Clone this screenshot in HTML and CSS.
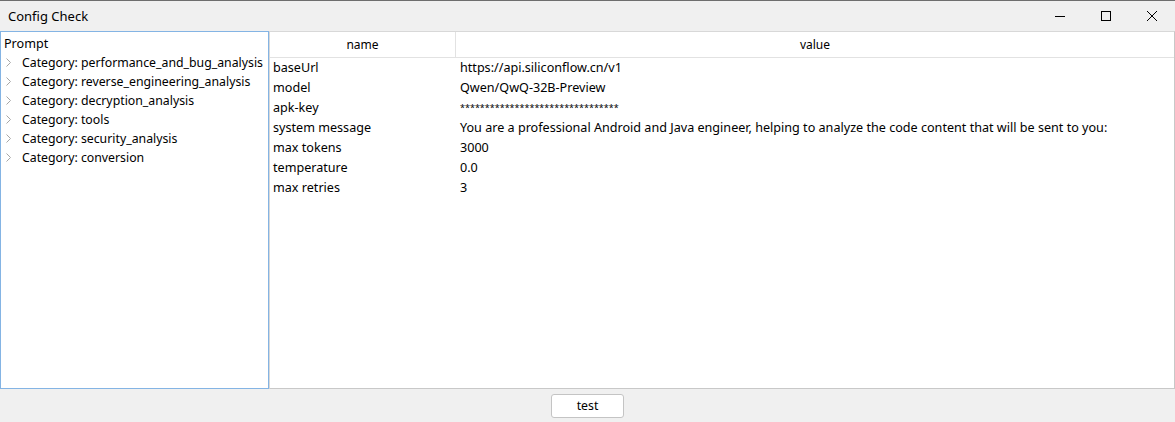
FILE: index.html
```html
<!DOCTYPE html>
<html>
<head>
<meta charset="utf-8">
<link rel="stylesheet" href="styles.css">
</head>
<body>
<div class="window">
  <div class="titlebar">
    <span class="title">Config Check</span>
    <div class="controls">
      <div class="ctl"><svg width="12" height="12" viewBox="0 0 12 12"><path d="M1 6.5H11" stroke="#000" stroke-width="1"/></svg></div>
      <div class="ctl"><svg width="12" height="12" viewBox="0 0 12 12"><rect x="1.5" y="1.5" width="9" height="9" fill="none" stroke="#000" stroke-width="1"/></svg></div>
      <div class="ctl"><svg width="12" height="12" viewBox="0 0 12 12"><path d="M1 1L11 11M11 1L1 11" stroke="#000" stroke-width="1"/></svg></div>
    </div>
  </div>
  <div class="main">
    <div class="tree">
      <div class="tree-head">Prompt</div>
      <div class="tree-row"><svg class="chev" width="5" height="9" viewBox="0 0 5 9"><path d="M0.5 0.5L4.5 4.5L0.5 8.5" fill="none" stroke="#a6a6a6" stroke-width="1"/></svg>Category: performance_and_bug_analysis</div>
      <div class="tree-row"><svg class="chev" width="5" height="9" viewBox="0 0 5 9"><path d="M0.5 0.5L4.5 4.5L0.5 8.5" fill="none" stroke="#a6a6a6" stroke-width="1"/></svg>Category: reverse_engineering_analysis</div>
      <div class="tree-row"><svg class="chev" width="5" height="9" viewBox="0 0 5 9"><path d="M0.5 0.5L4.5 4.5L0.5 8.5" fill="none" stroke="#a6a6a6" stroke-width="1"/></svg>Category: decryption_analysis</div>
      <div class="tree-row"><svg class="chev" width="5" height="9" viewBox="0 0 5 9"><path d="M0.5 0.5L4.5 4.5L0.5 8.5" fill="none" stroke="#a6a6a6" stroke-width="1"/></svg>Category: tools</div>
      <div class="tree-row"><svg class="chev" width="5" height="9" viewBox="0 0 5 9"><path d="M0.5 0.5L4.5 4.5L0.5 8.5" fill="none" stroke="#a6a6a6" stroke-width="1"/></svg>Category: security_analysis</div>
      <div class="tree-row"><svg class="chev" width="5" height="9" viewBox="0 0 5 9"><path d="M0.5 0.5L4.5 4.5L0.5 8.5" fill="none" stroke="#a6a6a6" stroke-width="1"/></svg>Category: conversion</div>
    </div>
    <div class="table">
      <div class="thead">
        <div class="th c-name">name</div>
        <div class="th c-value">value</div>
      </div>
      <div class="tbody">
        <div class="tr"><div class="td c-name">baseUrl</div><div class="td c-value">https://api.siliconflow.cn/v1</div></div>
        <div class="tr"><div class="td c-name">model</div><div class="td c-value">Qwen/QwQ-32B-Preview</div></div>
        <div class="tr"><div class="td c-name">apk-key</div><div class="td c-value"><span class="stars">********************************</span></div></div>
        <div class="tr"><div class="td c-name">system message</div><div class="td c-value">You are a professional Android and Java engineer, helping to analyze the code content that will be sent to you:</div></div>
        <div class="tr"><div class="td c-name">max tokens</div><div class="td c-value">3000</div></div>
        <div class="tr"><div class="td c-name">temperature</div><div class="td c-value">0.0</div></div>
        <div class="tr"><div class="td c-name">max retries</div><div class="td c-value">3</div></div>
      </div>
    </div>
  </div>
  <div class="footer">
    <button class="btn">test</button>
  </div>
</div>
</body>
</html>
```
FILE: styles.css
```css
html, body {
  margin: 0;
  padding: 0;
  background: #f0f0f0;
}
body {
  font-family: "Noto Sans", "Open Sans", sans-serif;
  font-size: 12.6px;
  color: #000;
}
.window {
  width: 1175px;
  height: 422px;
  display: flex;
  flex-direction: column;
  box-sizing: border-box;
  border-top: 1px solid #6e6e6e;
  background: #f0f0f0;
  overflow: hidden;
}
.titlebar {
  height: 30px;
  display: flex;
  align-items: center;
  justify-content: space-between;
  flex: none;
}
.title {
  padding-left: 8px;
  font-size: 13px;
  line-height: 30px;
}
.controls {
  display: flex;
  height: 30px;
}
.ctl {
  width: 46px;
  height: 30px;
  display: flex;
  align-items: center;
  justify-content: center;
}
.main {
  height: 358px;
  display: flex;
  flex: none;
}
.tree {
  width: 269px;
  box-sizing: border-box;
  border: 1px solid #84b4e4;
  background: #fff;
  padding-top: 2px;
  flex: none;
}
.tree-head {
  height: 19px;
  line-height: 19px;
  padding-left: 3px;
}
.tree-row {
  height: 19px;
  line-height: 19px;
  display: flex;
  align-items: center;
  padding-left: 5px;
  font-size: 12.3px;
}
.chev {
  flex: none;
  margin-right: 11px;
}
.table {
  flex: 1;
  box-sizing: border-box;
  border-top: 1px solid #d8d8d8;
  border-left: 1px solid #d8d8d8;
  border-right: 1px solid #c8c8c8;
  border-bottom: 1px solid #c8c8c8;
  background: #fff;
}
.thead {
  display: flex;
  height: 25px;
  border-bottom: 1px solid #e2e2e2;
  font-size: 12px;
}
.th {
  text-align: center;
  line-height: 25px;
}
.thead .c-name {
  border-right: 1px solid #e2e2e2;
}
.c-name {
  width: 186px;
  box-sizing: border-box;
  flex: none;
}
.c-value {
  flex: 1;
}
.tr {
  display: flex;
  height: 20px;
  line-height: 20px;
}
.td.c-name {
  padding-left: 3px;
}
.td.c-value {
  padding-left: 4px;
  white-space: nowrap;
}
.stars {
  font-size: 9px;
  vertical-align: 2px;
}
.footer {
  flex: 1;
  display: flex;
  justify-content: center;
  align-items: flex-start;
  padding-top: 5px;
}
.btn {
  width: 73px;
  height: 24px;
  background: #fff;
  border: 1px solid #c4c4c4;
  border-radius: 3px;
  font-family: "Noto Sans", "Open Sans", sans-serif;
  font-size: 12.3px;
  line-height: 20px;
  color: #000;
  padding: 0 0 1px;
}
```
